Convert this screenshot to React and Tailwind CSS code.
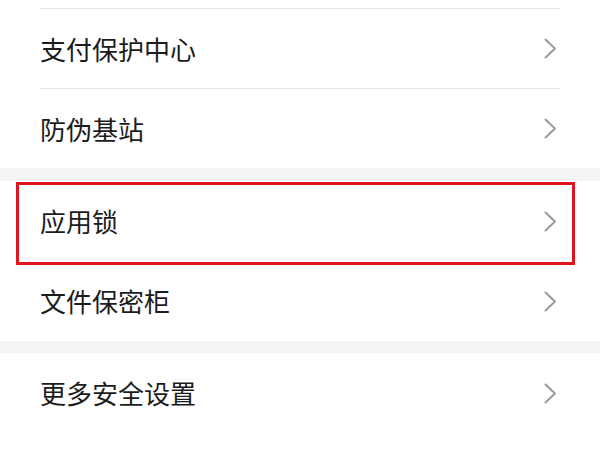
import React from "react";

const font = { fontFamily: '"Noto Sans CJK SC", "Noto Sans", sans-serif' };

function Chevron() {
  return (
    <svg width="13" height="21" viewBox="0 0 13 21" fill="none">
      <polyline
        points="1.5,1.5 11,10.5 1.5,19.5"
        stroke="#9a9a9a"
        strokeWidth="2"
        strokeLinecap="round"
        strokeLinejoin="round"
      />
    </svg>
  );
}

function Row({ label, divider }) {
  return (
    <div className={`mx-10 h-[80px] flex items-center justify-between ${divider ? "border-t border-[#e6e6e6]" : ""}`}>
      <span className="text-[26px] text-[#1c1c1c] leading-none">{label}</span>
      <span className="mr-[3px] flex items-center">
        <Chevron />
      </span>
    </div>
  );
}

function App() {
  return (
    <div className="w-[600px] h-[450px] bg-white overflow-hidden" style={font}>
      <div className="bg-white pt-2">
        <Row label="支付保护中心" divider />
        <Row label="防伪基站" divider />
      </div>

      <div className="h-[13px] bg-[#f5f5f5]" />

      <div className="relative bg-white">
        <Row label="应用锁" />
        <Row label="文件保密柜" />
        {/* highlight frame */}
        <div className="absolute left-4 right-[25px] top-[1px] h-[83px] border-[3px] border-[#e0141e] pointer-events-none" />
      </div>

      <div className="h-[12px] bg-[#f5f5f5]" />

      <div className="bg-white">
        <Row label="更多安全设置" />
      </div>
    </div>
  );
}

export default App;
